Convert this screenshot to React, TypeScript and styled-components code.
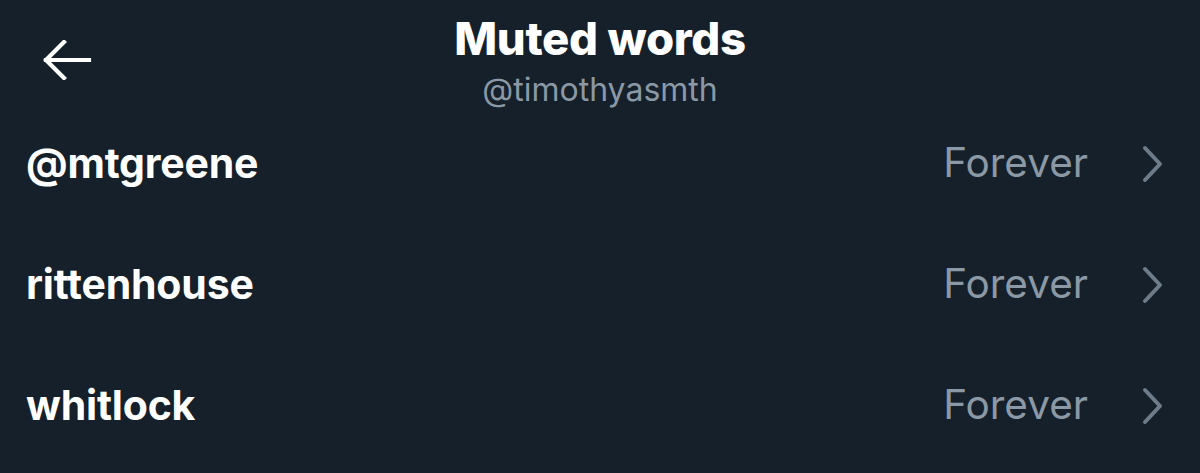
import React from "react";
import styled, { createGlobalStyle } from "styled-components";

const GlobalStyle = createGlobalStyle`
  html, body {
    margin: 0;
    padding: 0;
    background: #15202b;
  }
  body {
    font-family: Inter, "Noto Sans", sans-serif;
    -webkit-font-smoothing: antialiased;
  }
`;

interface MutedWord {
  word: string;
  duration: string;
}

const words: MutedWord[] = [
  { word: "@mtgreene", duration: "Forever" },
  { word: "rittenhouse", duration: "Forever" },
  { word: "whitlock", duration: "Forever" },
];

const Screen = styled.div`
  width: 1200px;
  height: 473px;
  background: #15202b;
  overflow: hidden;
  display: flex;
  flex-direction: column;
`;

const Header = styled.div`
  height: 103px;
  display: grid;
  grid-template-columns: 120px 1fr 120px;
  align-items: start;
`;

const BackButton = styled.button`
  background: none;
  border: none;
  padding: 0;
  margin: 40px 0 0 41px;
  width: 52px;
  height: 40px;
  display: flex;
  align-items: center;
  justify-content: center;
  cursor: pointer;
`;

const TitleBlock = styled.div`
  display: flex;
  flex-direction: column;
  align-items: center;
  padding-top: 12px;
`;

const Title = styled.div`
  color: #ffffff;
  font-size: 45.5px;
  font-weight: 800;
  line-height: 54px;
  letter-spacing: -0.3px;
`;

const Subtitle = styled.div`
  color: #8b98a5;
  font-size: 32px;
  font-weight: 400;
  line-height: 44px;
  margin-top: 2px;
`;

const List = styled.div`
  display: flex;
  flex-direction: column;
`;

const Row = styled.div`
  height: 121px;
  display: flex;
  align-items: center;
  padding: 0 34px 0 26px;
`;

const Word = styled.div`
  flex: 1;
  color: #ffffff;
  font-size: 41px;
  font-weight: 700;
  letter-spacing: -0.2px;
  margin-top: -2px;
`;

const Duration = styled.div`
  color: #8b98a5;
  font-size: 40.5px;
  font-weight: 400;
  margin-right: 52px;
  margin-top: -2px;
`;

const Chevron = () => (
  <svg width="26" height="38" viewBox="0 0 26 38" fill="none">
    <path d="M5 3 L20 19 L5 35" stroke="#6e7c8a" strokeWidth="4" strokeLinecap="round" strokeLinejoin="round" />
  </svg>
);

const BackArrow = () => (
  <svg width="50" height="40" viewBox="0 0 50 40" fill="none">
    <path d="M47 20 H4 M22 2 L4 20 L22 38" stroke="#ffffff" strokeWidth="4.2" strokeLinecap="square" strokeLinejoin="miter" />
  </svg>
);

export default function App() {
  return (
    <>
      <GlobalStyle />
      <Screen>
        <Header>
          <BackButton aria-label="Back">
            <BackArrow />
          </BackButton>
          <TitleBlock>
            <Title>Muted words</Title>
            <Subtitle>@timothyasmth</Subtitle>
          </TitleBlock>
          <div />
        </Header>
        <List>
          {words.map((w) => (
            <Row key={w.word}>
              <Word>{w.word}</Word>
              <Duration>{w.duration}</Duration>
              <Chevron />
            </Row>
          ))}
        </List>
      </Screen>
    </>
  );
}
